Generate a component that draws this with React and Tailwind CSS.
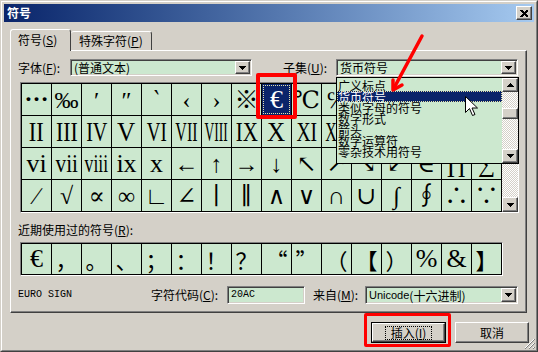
import React from 'react'

const sunken =
  'border border-t-[#808080] border-l-[#808080] border-r-white border-b-white shadow-[inset_1px_1px_0_#404040,inset_-1px_-1px_0_#d4d0c8]'
const raised =
  'border border-t-white border-l-white border-r-[#404040] border-b-[#404040] shadow-[inset_-1px_-1px_0_#808080]'
const checker =
  'bg-[image:repeating-conic-gradient(#ffffff_0_25%,#d4d0c8_0_50%)] bg-[length:2px_2px]'

const serif = "font-['Liberation_Serif','DejaVu_Serif','Noto_Sans_CJK_SC',serif]"
const cjk = "font-['Noto_Sans_CJK_SC',sans-serif]"

// roman numerals are drawn squeezed into the cell like the original glyphs
const squeeze = {
  II: 'scale-x-[0.8]',
  III: 'scale-x-[0.78]',
  IV: 'scale-x-[0.72]',
  V: 'scale-x-[0.9]',
  VI: 'scale-x-[0.68]',
  VII: 'scale-x-[0.57]',
  VIII: 'scale-x-[0.48]',
  IX: 'scale-x-[0.75]',
  X: 'scale-x-[0.9]',
  XI: 'scale-x-[0.7]',
  XII: 'scale-x-[0.57]',
}
const squeezeLower = {
  i: '',
  ii: '',
  iii: 'scale-x-[0.8]',
  iv: '',
  v: '',
  vi: '',
  vii: 'scale-x-[0.82]',
  viii: 'scale-x-[0.68]',
  ix: '',
  x: '',
}

const gridRows = [
  ['…', '‰', '′', '″', '‵', '‹', '›', '※', '€', '℃', '℅', '℉', '№', '℡', '™', 'I'],
  ['II', 'III', 'IV', 'V', 'VI', 'VII', 'VIII', 'IX', 'X', 'XI', 'XII', 'i', 'ii', 'iii', 'iv', 'v'],
  ['vi', 'vii', 'viii', 'ix', 'x', '←', '↑', '→', '↓', '↖', '↗', '↘', '↙', '∈', '∏', '∑'],
  ['∕', '√', '∝', '∞', '∟', '∠', '∣', '∥', '∧', '∨', '∩', '∪', '∫', '∮', '∴', '∵'],
]

const recent = [
  ['€', 'serif'], ['，', 'cjk'], ['。', 'cjk'], ['、', 'cjk'], ['；', 'cjk'], ['：', 'cjk'],
  ['！', 'cjk'], ['？', 'cjk'], ['“', 'cjk'], ['”', 'cjk'], ['（', 'cjk'], ['【', 'cjk'],
  ['）', 'cjk'], ['%', 'serif'], ['&', 'serif'], ['】', 'cjk'],
]

const subsets = ['广义标点', '货币符号', '类似字母的符号', '数字形式', '箭头', '数学运算符', '零杂技术用符号']

function DownArrow() {
  return (
    <svg width="7" height="4" viewBox="0 0 7 4" shapeRendering="crispEdges">
      <path d="M0 0h7L3.5 4z" fill="#000" />
    </svg>
  )
}

function UpArrow() {
  return (
    <svg width="7" height="4" viewBox="0 0 7 4" shapeRendering="crispEdges">
      <path d="M0 4h7L3.5 0z" fill="#000" />
    </svg>
  )
}

function Combo({ className, children }) {
  return (
    <div className={`flex h-[17px] p-px bg-[#cce8cf] ${sunken} ${className}`}>
      <div className="flex flex-1 items-center whitespace-nowrap pl-[2px] text-[12px] leading-[13px]">
        {children}
      </div>
      <div className={`flex w-[15px] items-center justify-center bg-[#d4d0c8] ${raised}`}>
        <DownArrow />
      </div>
    </div>
  )
}

function Sym({ ch, selected }) {
  let cls = 'text-[24px]'
  if (squeeze[ch] !== undefined) cls = `text-[28px] ${squeeze[ch]}`
  else if (squeezeLower[ch] !== undefined) cls = `text-[26px] ${squeezeLower[ch]}`
  else if (ch === '…') cls = 'text-[24px] -translate-y-[7px] font-bold'
  else if (ch === '€') cls = 'text-[26px]'
  return (
    <div
      className={`flex h-[31px] items-center justify-center overflow-hidden ${
        selected ? 'bg-[#0a246a] text-white outline-1 outline-dotted outline-[#e6e2a8] -outline-offset-2' : 'bg-[#cce8cf] text-black'
      }`}
    >
      <span className={`inline-block whitespace-nowrap leading-none ${serif} ${cls}`}>{ch}</span>
    </div>
  )
}

function Title() {
  return (
    <div className="flex h-[18px] items-center justify-between bg-linear-to-r from-[#0a246a] to-[#a6caf0] pl-[3px] pr-[2px]">
      <span className="text-[12px] font-bold leading-none text-white">符号</span>
      <div className={`flex h-[14px] w-[16px] items-center justify-center bg-[#d4d0c8] ${raised}`}>
        <svg width="8" height="7" viewBox="0 0 8 7" shapeRendering="crispEdges">
          <path d="M0 0h2l2 2 2-2h2v1L5.5 3.5 8 6v1H6L4 5 2 7H0V6l2.5-2.5L0 1z" fill="#000" />
        </svg>
      </div>
    </div>
  )
}

export default function App() {
  return (
    <div className="relative h-[352px] w-[538px] overflow-hidden border border-t-[#d4d0c8] border-l-[#d4d0c8] border-r-[#404040] border-b-[#404040] bg-[#d4d0c8] font-['Noto_Sans_CJK_SC',sans-serif] text-[12px] text-black">
      <div className="flex h-full flex-col border border-t-white border-l-white border-r-[#808080] border-b-[#808080] p-[2px]">
        <Title />

        {/* tabs */}
        <div className="mt-[7px] flex h-[21px] items-end pl-[6px]">
          <div className="relative z-10 -mb-px flex h-[22px] w-[61px] items-start rounded-t-[3px] border border-b-0 border-t-white border-l-white border-r-[#404040] bg-[#d4d0c8] pl-[7px] pt-[3px] leading-[14px]">
            符号(<span className="underline">S</span>)
          </div>
          <div className="flex h-[19px] w-[81px] items-start rounded-t-[3px] border border-b-0 border-l-0 border-t-white border-r-[#404040] bg-[#d4d0c8] pl-[8px] pt-[2px] leading-[14px]">
            特殊字符(<span className="underline">P</span>)
          </div>
        </div>

        {/* tab panel */}
        <div className="ml-[6px] flex h-[263px] w-[517px] flex-col border border-t-white border-l-white border-r-[#404040] border-b-[#404040] shadow-[inset_-1px_-1px_0_#808080]">
          <div className="mt-[8px] flex h-[17px] items-center pl-[7px]">
            <span className="w-[52px] leading-none">
              字体(<span className="underline">F</span>):
            </span>
            <Combo className="w-[182px]">(普通文本)</Combo>
            <span className="ml-[31px] w-[53px] leading-none">
              子集(<span className="underline">U</span>):
            </span>
            <Combo className="w-[182px]">货币符号</Combo>
          </div>

          {/* symbol grid */}
          <div className="ml-[9px] mt-[6px] flex w-fit border border-t-[#808080] border-l-[#808080] border-r-white border-b-white">
            <div className="grid grid-cols-[repeat(16,29px)] gap-px bg-black p-px">
              {gridRows.map((row, r) =>
                row.map((ch, c) => <Sym key={`${r}-${c}`} ch={ch} selected={r === 0 && c === 8} />)
              )}
            </div>
            <div className={`flex w-[16px] flex-col ${checker}`}>
              <div className={`flex h-[15px] items-center justify-center bg-[#d4d0c8] ${raised}`}>
                <UpArrow />
              </div>
              <div className={`h-[16px] bg-[#d4d0c8] ${raised}`} />
              <div className="flex-1" />
              <div className={`flex h-[15px] items-center justify-center bg-[#d4d0c8] ${raised}`}>
                <DownArrow />
              </div>
            </div>
          </div>

          <div className="ml-[7px] mt-[10px] h-[14px] leading-[14px]">
            近期使用过的符号(<span className="underline">R</span>):
          </div>
          <div className="ml-[9px] mt-[5px] w-fit border border-t-[#808080] border-l-[#808080] border-r-white border-b-white">
            <div className="grid grid-cols-[repeat(16,29px)] gap-px bg-black p-px">
              {recent.map(([ch, f], i) => (
                <div key={i} className="flex h-[30px] items-center justify-center overflow-hidden bg-[#cce8cf]">
                  <span className={`leading-none ${f === 'cjk' ? `${cjk} text-[22px]` : `${serif} text-[26px]`}`}>
                    {ch}
                  </span>
                </div>
              ))}
            </div>
          </div>

          <div className="mt-[10px] flex h-[18px] items-center pl-[7px]">
            <span className="w-[133px] font-['Liberation_Mono',monospace] text-[10px] leading-none">EURO SIGN</span>
            <span className="w-[76px] leading-none">
              字符代码(<span className="underline">C</span>):
            </span>
            <div className={`flex h-[18px] w-[78px] items-center bg-[#cce8cf] pl-[3px] ${sunken}`}>
              <span className="font-['Liberation_Mono',monospace] text-[10px] leading-none">20AC</span>
            </div>
            <span className="ml-[8px] w-[52px] leading-none">
              来自(<span className="underline">M</span>):
            </span>
            <Combo className="h-[18px] w-[153px]">
              <span className="font-['Liberation_Sans',sans-serif] text-[11px]">Unicode</span>(十六进制)
            </Combo>
          </div>
        </div>

        {/* buttons */}
        <div className="mt-[9px] flex justify-end gap-[9px] pr-[5px]">
          <div className="h-[21px] w-[75px] border border-black">
            <div className={`flex h-full items-center justify-center bg-[#d4d0c8] ${raised}`}>
              <span className="border border-dotted border-black px-[5px] leading-[12px]">
                插入(<span className="underline">I</span>)
              </span>
            </div>
          </div>
          <div className={`flex h-[21px] w-[74px] items-center justify-center bg-[#d4d0c8] ${raised}`}>取消</div>
        </div>
      </div>

      {/* open subset dropdown */}
      <div className="absolute left-[335px] top-[76px] flex h-[87px] w-[183px] border border-black bg-[#cce8cf]">
        <div className="flex-1 overflow-hidden pt-[2px]">
          {subsets.map((s, i) => (
            <div
              key={s}
              className={`h-[11px] whitespace-nowrap pl-[1px] text-[12px] leading-[11px] ${
                i === 1 ? 'bg-[#0a246a] text-white outline-1 outline-dotted outline-[#e6e2a8] -outline-offset-1' : 'text-black'
              }`}
            >
              {s}
            </div>
          ))}
        </div>
        <div className={`flex w-[16px] flex-col ${checker}`}>
          <div className={`flex h-[14px] items-center justify-center bg-[#d4d0c8] ${raised}`}>
            <UpArrow />
          </div>
          <div className="h-[16px]" />
          <div className={`h-[11px] bg-[#d4d0c8] ${raised}`} />
          <div className="flex-1" />
          <div className={`flex h-[14px] items-center justify-center bg-[#d4d0c8] ${raised}`}>
            <DownArrow />
          </div>
        </div>
      </div>

      {/* mouse pointer */}
      <svg className="pointer-events-none absolute left-[464px] top-[95px]" width="13" height="21" viewBox="0 0 13 21">
        <path d="M0.5 0.5v16l4-4 3 7 2.5-1-3-6.5h5.5z" fill="#fff" stroke="#000" strokeWidth="1" />
      </svg>

      {/* red annotations */}
      <div className="pointer-events-none absolute left-[255px] top-[72px] h-[46px] w-[41px] rounded-[2px] border-[4px] border-[#ff0000]" />
      <div className="pointer-events-none absolute left-[363px] top-[312px] h-[34px] w-[87px] rounded-[2px] border-[3px] border-[#ff0000]" />
      <svg className="pointer-events-none absolute left-0 top-0" width="538" height="352">
        <g stroke="#ff0000" strokeWidth="3.5" strokeLinecap="round" fill="none">
          <path d="M421 35 L393 87" />
          <path d="M392 89 L401 84 M392 89 L392 79" />
        </g>
      </svg>

      {/* size grip */}
      <svg className="pointer-events-none absolute bottom-[2px] right-[2px]" width="11" height="11" viewBox="0 0 11 11">
        <g strokeWidth="1">
          <path d="M10 1 L1 10 M10 5 L5 10 M10 9 L9 10" stroke="#fff" />
          <path d="M11 1 L1 11 M11 5 L5 11 M11 9 L9 11" stroke="#808080" />
        </g>
      </svg>
    </div>
  )
}
